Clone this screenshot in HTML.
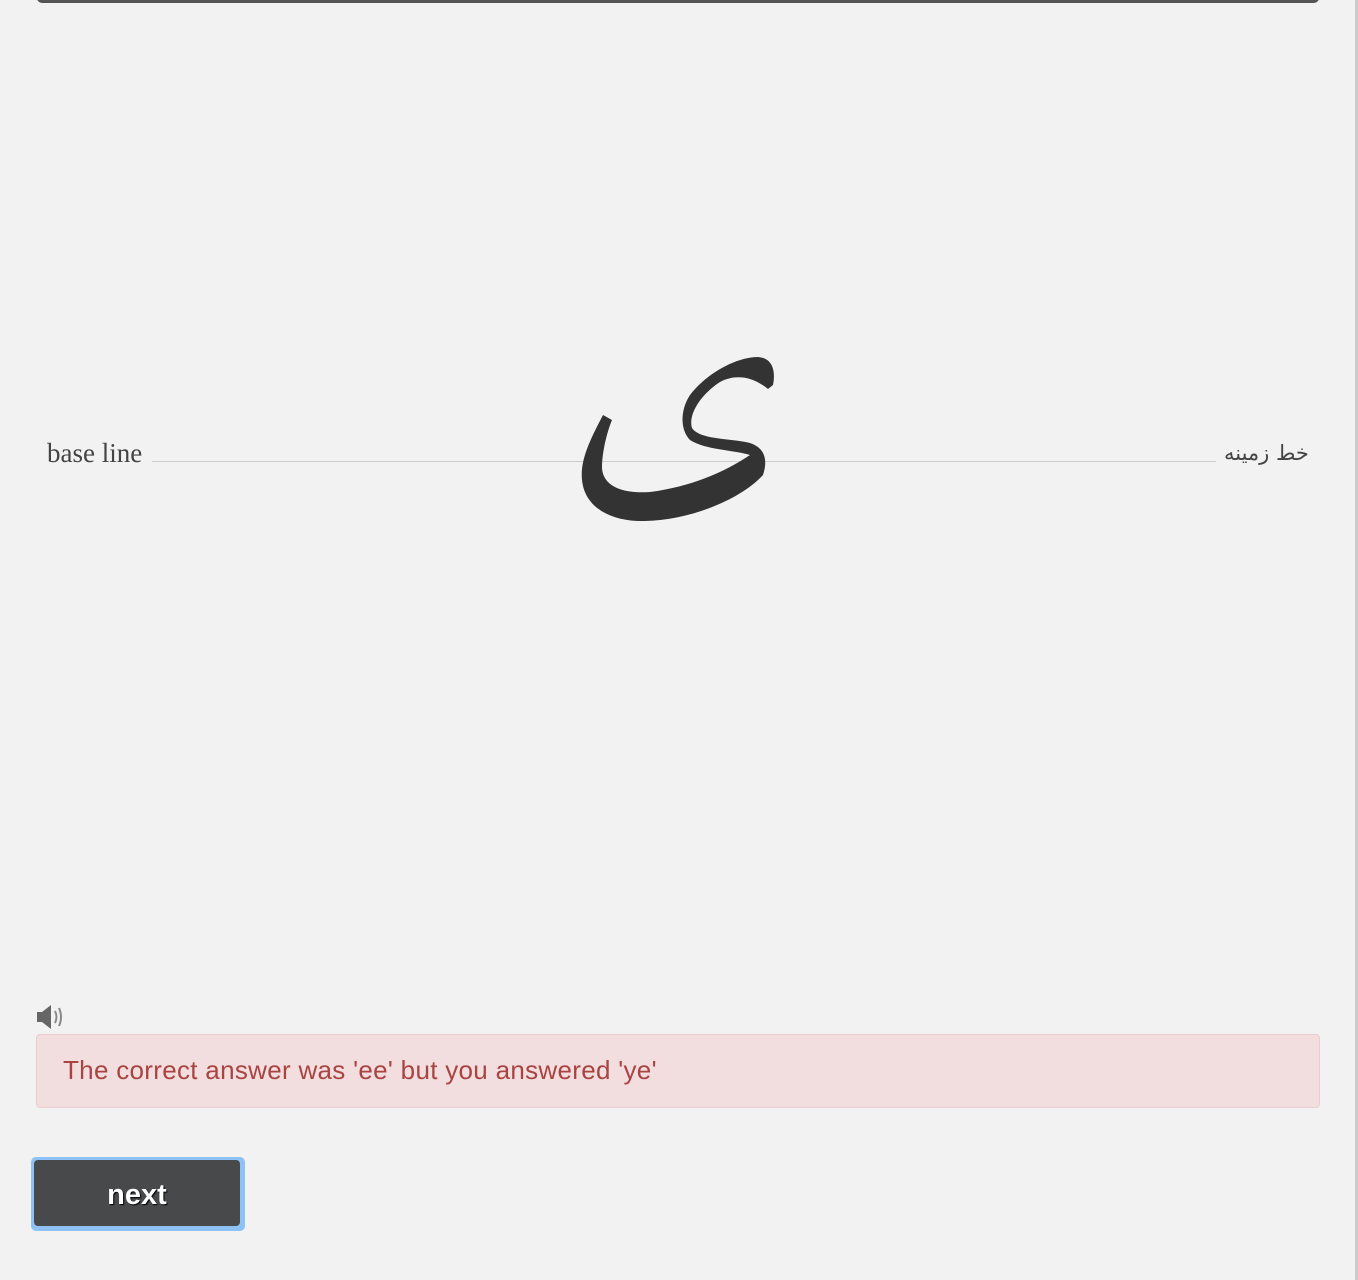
<!DOCTYPE html>
<html><head><style>
body{margin:0;width:1358px;height:1280px;background:#f2f2f2;position:relative;overflow:hidden;font-family:"Liberation Sans",sans-serif}
.top{position:absolute;left:37px;top:-6px;width:1282px;height:9px;background:#555;border-radius:0 0 5px 5px}
.edge{position:absolute;left:1355px;top:0;width:3px;height:1280px;background:#ccc}
.bl{position:absolute;left:47px;top:438px;font-family:"Liberation Serif",serif;font-size:27px;color:#444}
.fa{position:absolute;left:1224px;top:441px;font-family:"DejaVu Sans",serif;font-size:21px;color:#444}
.line{position:absolute;left:152px;top:461px;width:1064px;height:1px;background:#ccc}
.alert{position:absolute;left:36px;top:1034px;width:1284px;height:74px;box-sizing:border-box;background:#f2dede;border:1px solid #ebccd1;border-radius:4px;color:#a94442;font-size:26px;letter-spacing:0.3px;padding:20px 26px}
.btn{position:absolute;left:31px;top:1157px;width:214px;height:74px;box-sizing:border-box;border:3px solid #8ec1f5;border-radius:5px;background:#8ec1f5}
.btn div{width:206px;height:66px;background:#48494b;border-radius:4px;color:#fff;font-weight:bold;font-size:29px;text-align:center;line-height:70px;text-shadow:1px 1px 1px #000}
</style></head><body>
<div class="top"></div><div class="edge"></div>
<div class="line"></div>
<div class="bl">base line</div>
<div class="fa" dir="rtl">خط زمینه</div>
<svg style="position:absolute;left:0;top:0" width="1358" height="1280">
<path fill="#333" d="M603,415 C590,440 580,460 582,480 C585,510 615,522 645,521 C690,520 740,500 763,475 C768,460 765,448 750,443 C730,438 700,440 692,428 C688,415 700,395 720,382 C735,374 752,376 768,389 L773,385 C776,370 772,358 758,357 C735,357 705,375 690,395 C680,410 680,430 690,440 C705,450 735,450 750,455 C725,472 690,487 650,492 C620,494 603,485 602,468 C602,452 607,432 612,420 Z"/>
<g fill="#666"><rect x="37" y="1012" width="6" height="10"/><path d="M42,1012 L51,1005 L51,1029 L42,1022Z"/></g>
<g fill="none" stroke="#888" stroke-width="2"><path d="M55,1011 Q58,1017 55,1023"/><path d="M59,1008 Q63,1017 59,1026"/></g>
</svg>
<div class="alert">The correct answer was 'ee' but you answered 'ye'</div>
<div class="btn"><div>next</div></div>
</body></html>
